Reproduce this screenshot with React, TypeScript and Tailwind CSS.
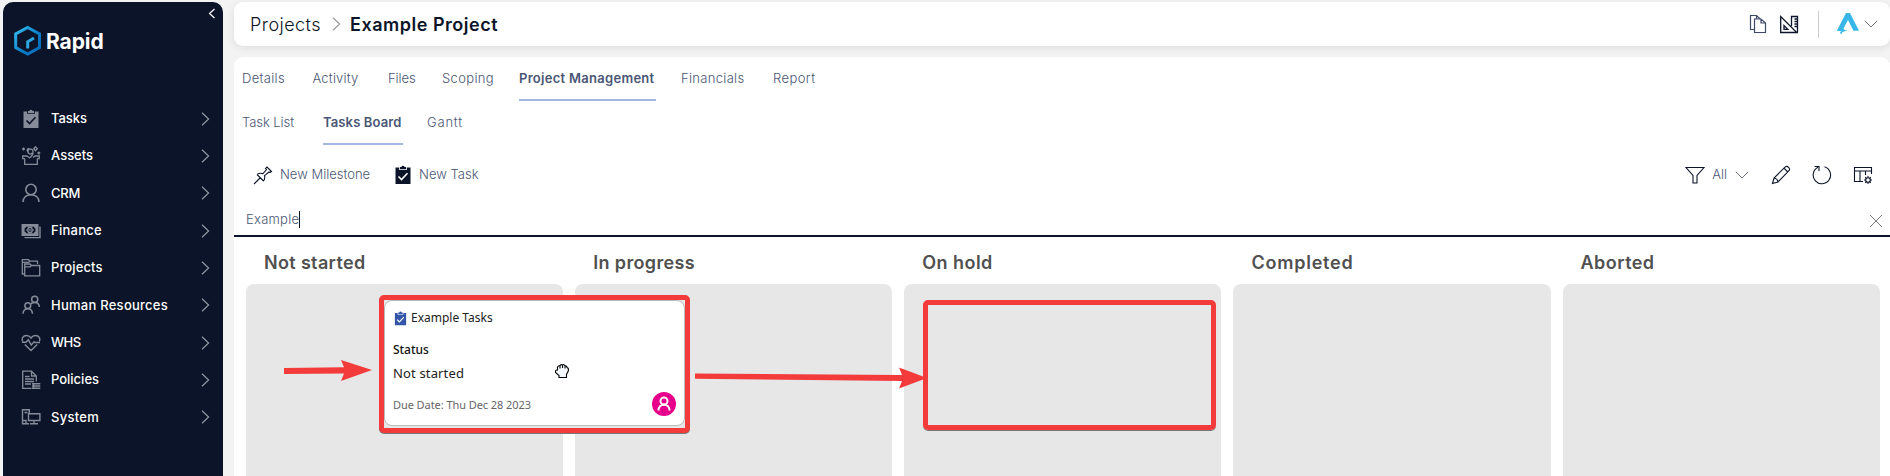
import React from "react";

type SvgProps = { w?: number; h?: number; className?: string; sw?: number; children?: React.ReactNode };

const Svg = ({ w = 20, h = 20, className = "", sw = 1.2, children }: SvgProps) => (
  <svg width={w} height={h} viewBox={`0 0 ${w} ${h}`} fill="none" stroke="currentColor" strokeWidth={sw} className={`shrink-0 ${className}`}>
    {children}
  </svg>
);

const ClipboardSolid = ({ tick, size = 20 }: { tick: string; size?: number }) => (
  <svg width={size} height={size} viewBox="0 0 20 20" fill="none" className="shrink-0">
    <path d="M2.5 2.5H6.2V5H13.8V2.500H17.500V19H2.500Z" fill="currentColor" />
    <path d="M7 1.900H8.400A1.700 1.700 0 0 1 11.600 1.900H13V4.200H7Z" fill="currentColor" />
    <path d="M5.500 11.500L8.500 14.500L14.500 8.200" stroke={tick} strokeWidth="1.600" />
  </svg>
);

const Assets = () => (
  <Svg sw={1.3}>
    <path d="M3.700 12.500V18.300H16.300V12.500M3.700 12.700H1.700V10H6L8 11.500M16.300 12.700H18.300V10H14L12 11.500" />
    <path d="M8 12.300Q12.500 9.500 12 5.500A2.500 2.500 0 1 0 8.500 7.800Q10.500 8.300 11.500 7M6.500 5.500Q5.500 3 8 2.300" />
    <path d="M14.500 .8L16.300 2.800L14.500 4.800L12.700 2.800ZM2.500 1.500V4.500M1 3H4M17.800 5.500V8.500M16.300 7H19.300" />
  </Svg>
);
const Person = () => (
  <Svg sw={1.6}>
    <circle cx="10" cy="6.500" r="5.200" />
    <path d="M2 19C2.200 14.500 5.600 11.700 10 11.700S17.800 14.500 18 19" />
  </Svg>
);
const Money = () => (
  <Svg sw={1.4}>
    <path d="M1.200 3.700H16.800V14.300H1.200Z" fill="currentColor" />
    <path d="M3.500 16.600H19V5.500" />
    <path d="M3.600 7.200Q5 7.200 5 5.800H13Q13 7.200 14.400 7.200V10.800Q13 10.800 13 12.200H5Q5 10.800 3.600 10.800Z" fill="#0b1428" stroke="none" />
    <ellipse cx="9" cy="9" rx="2.200" ry="2.700" />
    <path d="M6 9H5M12 9H13M9 7.800V10.200" strokeWidth="1.200" />
  </Svg>
);
const Folders = () => (
  <Svg sw={1.3}>
    <path d="M3.500 16H1.300V1.700H7.500L9 3.200H16.500V6M1.500 4.300H7.500L9 3.200" />
    <path d="M3.700 17.800V6H9L10.500 7.500H18.700V17.800ZM3.700 8.800H9L10.500 7.500" />
  </Svg>
);
const People = () => (
  <Svg sw={1.5}>
    <circle cx="13.700" cy="4.300" r="3.100" />
    <circle cx="6.800" cy="10.700" r="2.900" />
    <path d="M2 18.800C2.200 15.700 4 13.700 6.800 13.700S11.300 15.700 11.500 18.800M9.300 9.200C10.200 8 12 7.400 13.700 7.400C16.400 7.400 18.200 9.300 18.400 12" />
  </Svg>
);
const Heart = () => (
  <Svg sw={1.4}>
    <path d="M1.700 8.500C.3 5.500 2 2.500 5.500 2.500C7.500 2.500 9 3.500 10 5C11 3.500 12.500 2.500 14.500 2.500C18 2.500 19.700 5.500 18.300 8.500M3.800 11.500L10 17.500L16.200 11.500" />
    <path d="M1 9.300H5L7.300 6.800L10.300 12L13 8.800L14.200 9.500H19" />
  </Svg>
);
const Policy = () => (
  <Svg sw={1.3}>
    <path d="M10.500 18.300H1.700V1.200H10.500L15.300 6V11.500M10.500 1.200V6H15.300M4 6.500H8.500M4 9H13M4 11.500H13M4 14H10" />
    <path d="M11 13.700H19.300M11 16H19.300M11 18.300H19.300M12.500 13V19" strokeWidth="1.500" />
  </Svg>
);
const System = () => (
  <Svg sw={1.4}>
    <path d="M8 16.800H1.500V2.700H8.300V6M3.500 5.500H6.500M1.500 13.500H5V16.500" />
    <path d="M7.500 6.700H18.900V13.500H7.500ZM13 13.500V16.500M9 16.800H17" />
  </Svg>
);

const ChevronRight = ({ className = "" }) => (
  <Svg w={9} h={14} className={className} sw={1.2}>
    <path d="M1 .8L7.600 7L1 13.200" />
  </Svg>
);
const ChevronDown = () => (
  <Svg w={14} h={8} sw={1} className="text-[#6b7280]">
    <path d="M.8 .8L7 7L13.200 .8" />
  </Svg>
);

const menu = [
  { label: "Tasks", icon: <ClipboardSolid tick="#0b1428" />, cls: "tracking-[-0.041px]" },
  { label: "Assets", icon: <Assets />, cls: "tracking-[-0.021px]" },
  { label: "CRM", icon: <Person />, cls: "tracking-[-0.276px]" },
  { label: "Finance", icon: <Money />, cls: "tracking-[0.27px]" },
  { label: "Projects", icon: <Folders />, cls: "tracking-[0.1px]" },
  { label: "Human Resources", icon: <People />, cls: "tracking-[0.253px]" },
  { label: "WHS", icon: <Heart />, cls: "tracking-[-0.542px]" },
  { label: "Policies", icon: <Policy />, cls: "tracking-[-0.01px]" },
  { label: "System", icon: <System />, cls: "tracking-[0.273px]" },
];

const tabs = [
  { label: "Details", cls: "tracking-[0.319px]" },
  { label: "Activity", cls: "tracking-[0.184px]" },
  { label: "Files", cls: "tracking-[-0.094px]" },
  { label: "Scoping", cls: "tracking-[0.353px]" },
  { label: "Project Management", cls: "tracking-[0.286px]", active: true },
  { label: "Financials", cls: "tracking-[0.319px]" },
  { label: "Report", cls: "tracking-[0.432px]" },
];

const columns = [
  { label: "Not started", cls: "tracking-[0.344px]" },
  { label: "In progress", cls: "tracking-[0.372px]" },
  { label: "On hold", cls: "tracking-[0.455px]" },
  { label: "Completed", cls: "tracking-[0.769px]" },
  { label: "Aborted", cls: "tracking-[0.453px]" },
];

export default function App() {
  return (
    <div className="relative flex h-[476px] w-[1890px] overflow-hidden bg-[#f3f3f3] pl-[3px] pt-[2px] font-['Inter',sans-serif] text-[13px] text-[#4a5675]">
      <aside className="h-[500px] w-[220px] shrink-0 rounded-[10px] bg-[#0b1428] text-white">
        <div className="flex h-[22px] justify-end pr-[7px] pt-[6px]">
          <Svg w={8} h={11}><path d="M6.500 1L1.500 5.500L6.500 10" /></Svg>
        </div>
        <div className="flex h-[32px] items-center pl-[11px]">
          <svg width="28" height="32" viewBox="0 0 28 32" fill="none">
            <defs>
              <linearGradient id="hex" x1="0" y1="0" x2="1" y2="1">
                <stop offset="0" stopColor="#35bdf0" />
                <stop offset="0.6" stopColor="#0a7cc8" />
                <stop offset="1" stopColor="#0568b8" />
              </linearGradient>
            </defs>
            <path d="M13.700 3.500L25.500 10V23.500L13.700 30L1.700 23.500V10Z" stroke="url(#hex)" strokeWidth="3" />
            <path d="M13.700 24.500V17.800L20 14" stroke="#2aa9e2" strokeWidth="3" />
          </svg>
          <span className="ml-[4px] mt-[3px] whitespace-nowrap text-[21px] font-bold tracking-[-0.1px]">Rapid</span>
        </div>
        <nav className="mt-[44px]">
          {menu.map((m) => (
            <div key={m.label} className="flex h-[37.35px] items-center pl-[18px] pr-[13px]">
              <span className="w-[30px] text-[#858b98]">{m.icon}</span>
              <span className={`whitespace-nowrap font-medium ${m.cls}`}>{m.label}</span>
              <ChevronRight className="ml-auto text-[#9298a4]" />
            </div>
          ))}
        </nav>
      </aside>

      <main className="ml-[11px] flex min-w-0 flex-1 flex-col">
        <header className="flex h-[44px] shrink-0 items-center rounded-[9px] bg-white pl-[16px] pr-[12px] text-[18px] text-[#0b1428] shadow-[0_2px_8px_rgba(0,0,0,0.09)]">
          <span className="whitespace-nowrap font-light tracking-[0.457px]">Projects</span>
          <ChevronRight className="ml-[11px] text-[#9a9a9a]" />
          <span className="ml-[9px] whitespace-nowrap font-semibold tracking-[0.514px]">Example Project</span>
          <Svg w={18} h={20} className="ml-auto text-[#3d4a66]">
            <path d="M5 15.500H1.500V1.500H7.500L11.200 5M7.500 1.500V5M5.500 5H12L16.500 9V18.500H5.500ZM12 5V9H16.500" />
          </Svg>
          <Svg w={20} h={20} className="ml-[12px] text-[#0b1428]">
            <path d="M1.700 2.500V18.500H17.800ZM5 11.500V15.300H8.800ZM12.500 12V2.500H18.500V18.500M15.500 5H18M15.500 7.500H18M15.500 10H18M15.500 12.500H18" strokeWidth="1.300" />
          </Svg>
          <div className="ml-[19px] h-[27px] w-px bg-[#ccc]" />
          <svg width="24" height="24" viewBox="0 0 24 24" className="ml-[17px]">
            <path d="M10 1H14L23 18.800H17.500L12 8L7.500 16.500L8.800 18.200L12 18.300L6.500 20L5 22.500L4 20.500L5.500 19.200L.8 18.700Z" fill="#38b6e8" />
          </svg>
          <span className="ml-[4px]"><ChevronDown /></span>
        </header>

        <section className="mt-[11px] flex-1 rounded-t-[9px] bg-white">
          <div className="grid h-[44px] grid-cols-[70.5px_75.5px_54px_77px_162px_92px_1fr] pl-[8px]">
            {tabs.map((t) => (
              <div key={t.label} className="flex">
                <div className={`flex items-center border-b-2 pt-[2px] ${t.active ? "w-[137px] border-[#a3b8e0] font-semibold" : "border-transparent font-light"}`}>
                  <span className={`whitespace-nowrap ${t.cls}`}>{t.label}</span>
                </div>
              </div>
            ))}
          </div>
          <div className="flex h-[44px] pl-[8px] font-light">
            <div className="flex w-[81px] items-center border-b-2 border-transparent pt-[2px] tracking-[-0.073px]">Task List</div>
            <div className="flex w-[80px] items-center border-b-2 border-[#a3b8e0] pt-[2px] font-semibold tracking-[0.125px]">Tasks Board</div>
            <div className="ml-[24px] flex items-center border-b-2 border-transparent pt-[2px] tracking-[0.8px]">Gantt</div>
          </div>
          <div className="flex h-[59px] items-center pl-[19px] pr-[17px] font-light text-[#4a5675]">
            <Svg sw={1.1} className="text-[#0b1428]">
              <path d="M1 19L7.500 12.500M4 9.500L10.500 16M4 9.500Q7 7.500 10 8.700L13.500 4.500L12.500 3.500L14 2L18.500 6.500L17 7.500L16 7L11.500 10.700Q12.300 13.500 10.500 16" />
            </Svg>
            <span className="ml-[7px] whitespace-nowrap">New Milestone</span>
            <span className="ml-[23px] text-[#0b1428]"><ClipboardSolid tick="#fff" /></span>
            <span className="ml-[6px] whitespace-nowrap">New Task</span>
            <Svg sw={1.1} className="ml-auto text-[#0b1428]"><path d="M1 2.500H19L12 10.500V18H8V10.500Z" /></Svg>
            <span className="ml-[7px] mr-[8px]">All</span>
            <ChevronDown />
            <Svg sw={1.1} className="ml-[22px] text-[#0b1428]">
              <path d="M1.500 18.500L3 13L14.500 1.700Q16 .8 17.600 2.300Q19.200 4 18.200 5.500L7 17ZM3 13Q6.500 13.500 7 17M13 3.200L16.700 7" />
            </Svg>
            <Svg sw={1.1} className="ml-[21px] text-[#0b1428]"><path d="M12.500 1.800A8.700 8.700 0 1 1 6 2.300M2.500 1.500H7V6" /></Svg>
            <Svg sw={1.1} className="ml-[21px] text-[#0b1428]">
              <path d="M10 16.500H1.500V2.500H18.500V9M1.500 6H18.500M7 6V16.500M12.500 6V10" />
              <circle cx="15" cy="15" r="2.300" />
              <path d="M15 11V12.500M15 17.500V19M11 15H12.500M17.500 15H19M12.200 12.200L13.300 13.300M17.800 12.200L16.700 13.300M12.200 17.800L13.300 16.700M17.800 17.800L16.700 16.700" />
            </Svg>
          </div>
          <div className="flex h-[33px] items-center border-b-2 border-[#0b1428] pl-[12px] pr-[7px] font-light">
            <span className="whitespace-nowrap tracking-[0.25px]">Example</span>
            <span className="h-[17px] w-px bg-[#0b1428]" />
            <Svg w={14} h={14} sw={1} className="ml-auto mt-[3px] text-[#777]"><path d="M1 1L13 13M13 1L1 13" /></Svg>
          </div>
          <div className="flex gap-[12px] pl-[12px]">
            {columns.map((c) => (
              <div key={c.label} className="w-[317.15px]">
                <div className="flex h-[47px] items-center pl-[18px] pt-[4px] text-[18px] font-semibold text-[#505050]">
                  <span className={`whitespace-nowrap ${c.cls}`}>{c.label}</span>
                </div>
                <div className="h-[220px] rounded-[8px] bg-[#e7e7e7]" />
              </div>
            ))}
          </div>
        </section>
      </main>

      <div className="absolute left-[379px] top-[295px] h-[138px] w-[311px] rounded-[5px] border-[5px] border-[#f33b3b] bg-[#e7e7e7] font-['Noto_Sans',sans-serif] text-[12px] text-[#222] shadow-[0_1px_0_#777]">
        <div className="flex h-[126px] flex-col rounded-[8px] border border-[#bbb] bg-white pl-[8px] pr-[8px]">
          <div className="flex h-[34px] items-center">
            <span className="mr-[3px] text-[#3355a8]"><ClipboardSolid tick="#fff" size={15} /></span>
            <span className="whitespace-nowrap">Example Tasks</span>
          </div>
          <div className="mt-[3px] h-[24px] font-medium leading-[24px] tracking-[-0.05px] text-[#111]">Status</div>
          <div className="h-[23px] text-[13px] leading-[23px] tracking-[0.15px]">Not started</div>
          <div className="mt-[7px] flex items-center justify-between text-[11px] text-[#666]">
            <span className="whitespace-nowrap pt-[2px] tracking-[-0.07px]">Due Date: Thu Dec 28 2023</span>
            <span className="flex size-[24px] items-center justify-center rounded-full bg-[#e6008c] text-white">
              <Svg w={14} h={16} sw={2}>
                <circle cx="7" cy="5" r="3.500" />
                <path d="M1.500 14.500C1.500 11 4 8.700 7 8.700S12.500 11 12.500 14.500" />
              </Svg>
            </span>
          </div>
        </div>
      </div>

      <div className="absolute left-[923px] top-[300px] h-[130px] w-[293px] rounded-[5px] border-[5px] border-[#f33b3b] shadow-[0_1px_0_#777]" />
      <svg className="absolute left-[284px] top-[358px]" width="90" height="26" viewBox="0 0 90 26">
        <path d="M0 10L60 9.200L57 2L88 12L57 23L60 15.500L0 16Z" fill="#f33b3b" />
      </svg>
      <svg className="absolute left-[695px] top-[364px]" width="234" height="28" viewBox="0 0 234 28">
        <path d="M0 9.500L207 11L204 3.500L232 14L204 24.500L207 17L0 14.800Z" fill="#f33b3b" />
      </svg>
      <svg className="absolute left-[554px] top-[363px]" width="16" height="16" viewBox="0 0 16 16">
        <path d="M3.500 7V4Q4.500 2.200 6 3Q6.500 1 8.300 2Q10 1 11 2.700Q13 2.500 13 4.500Q15 5 14.300 8L12.500 11.500V14.500H5V12.500L1.500 9.500Q1.200 6.500 3.500 7ZM6 3V5.500M8.500 2V5M11 2.700V5.500" fill="#f4f9ff" stroke="#000" strokeWidth="1.100" />
      </svg>
    </div>
  );
}
